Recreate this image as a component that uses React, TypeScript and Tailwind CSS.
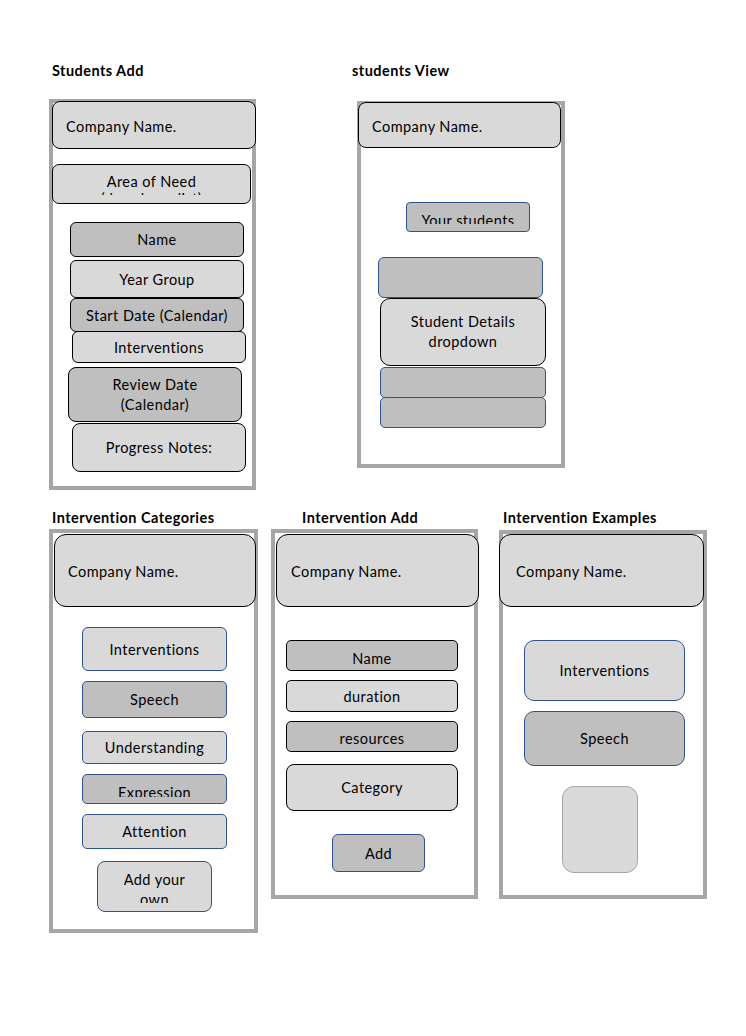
import type { ReactNode } from 'react'

function Title({ children, className }: { children: ReactNode; className: string }) {
  return <p className={`font-bold text-[14.5px] leading-[17px] whitespace-nowrap ${className}`}>{children}</p>
}

function Frame({ children, className }: { children: ReactNode; className: string }) {
  return <div className={`border-4 border-[#a6a6a6] flex flex-col items-start ${className}`}>{children}</div>
}

export default function App() {
  return (
    <div className="w-[746px] h-[1036px] bg-white text-black font-['Lato',sans-serif] text-[14.5px] leading-[17px] tracking-[0.45px] pt-[62px]">
      {/* Top row */}
      <div className="flex items-start pl-[49px]">
        {/* Students Add */}
        <div className="flex flex-col items-start">
          <Title className="ml-[3px]">Students Add</Title>
          <Frame className="mt-[20px] w-[207px] h-[391px]">
            <div className="-ml-[1px] -mt-[2px] w-[204px] h-[48px] shrink-0 rounded-[8px] border border-black bg-[#d9d9d9] flex items-center pl-[13px] pt-[2px]">
              Company Name.
            </div>
            <div className="-ml-[1px] mt-[15px] w-[199px] h-[40px] shrink-0 rounded-[7px] border border-black bg-[#d9d9d9] flex flex-col items-center pt-[8px]">
              <div className="h-[22px] overflow-hidden text-center">
                Area of Need
                <br />
                (dropdown list)
              </div>
            </div>
            <div className="ml-[17px] mt-[18px] w-[174px] h-[35px] shrink-0 rounded-[6px] border border-black bg-[#bfbfbf] flex items-center justify-center">
              Name
            </div>
            <div className="ml-[17px] mt-[3px] w-[174px] h-[38px] shrink-0 rounded-[6px] border border-black bg-[#d9d9d9] flex items-center justify-center">
              Year Group
            </div>
            <div className="ml-[17px] w-[174px] h-[34px] shrink-0 rounded-[6px] border border-black bg-[#bfbfbf] flex items-center justify-center">
              Start Date (Calendar)
            </div>
            <div className="ml-[19px] -mt-[1px] w-[174px] h-[32px] shrink-0 rounded-[6px] border border-black bg-[#d9d9d9] flex items-center justify-center">
              Interventions
            </div>
            <div className="ml-[15px] mt-[4px] w-[174px] h-[55px] shrink-0 rounded-[8px] border border-black bg-[#bfbfbf] flex items-center justify-center text-center leading-[20px]">
              Review Date
              <br />
              (Calendar)
            </div>
            <div className="ml-[19px] mt-[1px] w-[174px] h-[49px] shrink-0 rounded-[8px] border border-black bg-[#d9d9d9] flex items-center justify-center">
              Progress Notes:
            </div>
          </Frame>
        </div>

        {/* students View */}
        <div className="ml-[96px] flex flex-col items-start">
          <Title className="">students View</Title>
          <Frame className="ml-[5px] mt-[22px] w-[208px] h-[367px]">
            <div className="-ml-[3px] -mt-[3px] w-[203px] h-[46px] shrink-0 rounded-[8px] border border-black bg-[#d9d9d9] flex items-center pl-[13px] pt-[2px]">
              Company Name.
            </div>
            <div className="ml-[45px] mt-[54px] w-[124px] h-[30px] shrink-0 rounded-[4px] border border-[#2f528f] bg-[#bfbfbf] flex flex-col items-center pt-[9px]">
              <div className="h-[12px] overflow-hidden whitespace-nowrap">Your students</div>
            </div>
            <div className="ml-[17px] mt-[25px] w-[165px] h-[41px] shrink-0 rounded-[6px] border border-[#2f528f] bg-[#bfbfbf]" />
            <div className="ml-[19px] w-[166px] h-[68px] shrink-0 rounded-[10px] border border-black bg-[#d9d9d9] flex items-center justify-center text-center leading-[20px]">
              Student Details
              <br />
              dropdown
            </div>
            <div className="ml-[19px] mt-[1px] w-[166px] h-[31px] shrink-0 rounded-[5px] border border-[#2f528f] bg-[#bfbfbf]" />
            <div className="ml-[19px] -mt-[1px] w-[166px] h-[31px] shrink-0 rounded-[5px] border border-[#2f528f] bg-[#bfbfbf]" />
          </Frame>
        </div>
      </div>

      {/* Bottom row */}
      <div className="flex items-start pl-[49px] mt-[19px]">
        {/* Intervention Categories */}
        <div className="flex flex-col items-start">
          <Title className="ml-[3px]">Intervention Categories</Title>
          <Frame className="mt-[3px] w-[209px] h-[404px]">
            <div className="ml-[1px] mt-[1px] w-[202px] h-[73px] shrink-0 rounded-[12px] border border-black bg-[#d9d9d9] flex items-center pl-[13px] pt-[1px]">
              Company Name.
            </div>
            <div className="ml-[29px] mt-[20px] w-[145px] h-[44px] shrink-0 rounded-[6px] border border-[#2f528f] bg-[#d9d9d9] flex items-center justify-center">
              Interventions
            </div>
            <div className="ml-[29px] mt-[10px] w-[145px] h-[37px] shrink-0 rounded-[5px] border border-[#2f528f] bg-[#bfbfbf] flex items-center justify-center">
              Speech
            </div>
            <div className="ml-[29px] mt-[13px] w-[145px] h-[33px] shrink-0 rounded-[5px] border border-[#2f528f] bg-[#d9d9d9] flex items-center justify-center">
              Understanding
            </div>
            <div className="ml-[29px] mt-[10px] w-[145px] h-[30px] shrink-0 rounded-[5px] border border-[#2f528f] bg-[#bfbfbf] flex flex-col items-center pt-[9px]">
              <div className="h-[13px] overflow-hidden">Expression</div>
            </div>
            <div className="ml-[29px] mt-[10px] w-[145px] h-[35px] shrink-0 rounded-[5px] border border-[#2f528f] bg-[#d9d9d9] flex items-center justify-center">
              Attention
            </div>
            <div className="ml-[44px] mt-[12px] w-[115px] h-[51px] shrink-0 rounded-[8px] border border-[#2f528f] bg-[#d9d9d9] flex flex-col items-center pt-[8px]">
              <div className="h-[33px] overflow-hidden text-center leading-[20px]">
                Add your
                <br />
                own
              </div>
            </div>
          </Frame>
        </div>

        {/* Intervention Add */}
        <div className="ml-[13px] flex flex-col items-start">
          <Title className="ml-[31px]">Intervention Add</Title>
          <Frame className="mt-[3px] w-[207px] h-[370px]">
            <div className="ml-[1px] mt-[1px] w-[203px] h-[73px] shrink-0 rounded-[12px] border border-black bg-[#d9d9d9] flex items-center pl-[14px] pt-[1px]">
              Company Name.
            </div>
            <div className="ml-[11px] mt-[33px] w-[172px] h-[31px] shrink-0 rounded-[5px] border border-black bg-[#bfbfbf] flex items-center justify-center pt-[6px]">
              Name
            </div>
            <div className="ml-[11px] mt-[9px] w-[172px] h-[32px] shrink-0 rounded-[5px] border border-black bg-[#d9d9d9] flex items-center justify-center pt-[1px]">
              duration
            </div>
            <div className="ml-[11px] mt-[9px] w-[172px] h-[31px] shrink-0 rounded-[5px] border border-black bg-[#bfbfbf] flex items-center justify-center pt-[4px]">
              resources
            </div>
            <div className="ml-[11px] mt-[12px] w-[172px] h-[47px] shrink-0 rounded-[8px] border border-black bg-[#d9d9d9] flex items-center justify-center">
              Category
            </div>
            <div className="ml-[57px] mt-[23px] w-[93px] h-[38px] shrink-0 rounded-[6px] border border-[#2f528f] bg-[#bfbfbf] flex items-center justify-center">
              Add
            </div>
          </Frame>
        </div>

        {/* Intervention Examples */}
        <div className="ml-[21px] flex flex-col items-start">
          <Title className="ml-[4px]">Intervention Examples</Title>
          <Frame className="mt-[4px] w-[208px] h-[369px]">
            <div className="-ml-[4px] w-[205px] h-[73px] shrink-0 rounded-[12px] border border-black bg-[#d9d9d9] flex items-center pl-[16px] pt-[1px]">
              Company Name.
            </div>
            <div className="ml-[21px] mt-[33px] w-[161px] h-[61px] shrink-0 rounded-[10px] border border-[#2f528f] bg-[#d9d9d9] flex items-center justify-center">
              Interventions
            </div>
            <div className="ml-[21px] mt-[10px] w-[161px] h-[55px] shrink-0 rounded-[10px] border border-[#2f528f] bg-[#bfbfbf] flex items-center justify-center">
              Speech
            </div>
            <div className="ml-[59px] mt-[20px] w-[76px] h-[87px] shrink-0 rounded-[12px] border border-[#a6a6a6] bg-[#d9d9d9]" />
          </Frame>
        </div>
      </div>
    </div>
  )
}
